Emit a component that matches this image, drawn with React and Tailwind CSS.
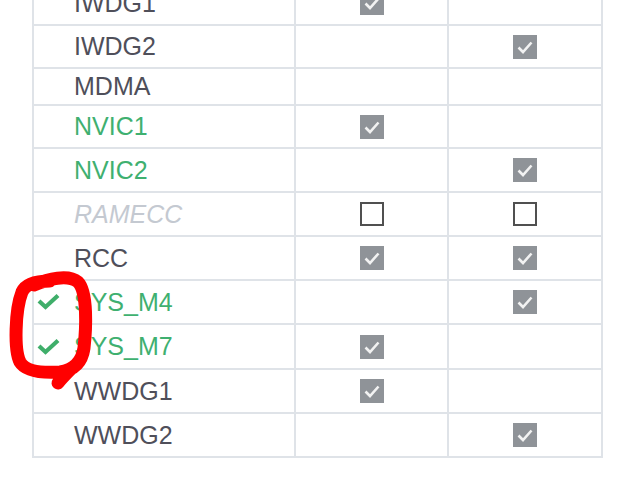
import React from "react";

const rows = [
  { name: "IWDG1", h: "h-[44px]", c1: "checked", c2: null, style: "normal" },
  { name: "IWDG2", h: "h-[43px]", c1: null, c2: "checked", style: "normal" },
  { name: "MDMA", h: "h-[37px]", c1: null, c2: null, style: "normal" },
  { name: "NVIC1", h: "h-[43px]", c1: "checked", c2: null, style: "green" },
  { name: "NVIC2", h: "h-[44px]", c1: null, c2: "checked", style: "green" },
  { name: "RAMECC", h: "h-[44px]", c1: "empty", c2: "empty", style: "disabled" },
  { name: "RCC", h: "h-[44px]", c1: "checked", c2: "checked", style: "normal" },
  { name: "SYS_M4", h: "h-[44px]", c1: null, c2: "checked", style: "green", ok: true },
  { name: "SYS_M7", h: "h-[45px]", c1: "checked", c2: null, style: "green", ok: true },
  { name: "WWDG1", h: "h-[44px]", c1: "checked", c2: null, style: "normal" },
  { name: "WWDG2", h: "h-[44px]", c1: null, c2: "checked", style: "normal" },
];

function Box({ state }) {
  if (state === "checked") {
    return (
      <div className="w-[24px] h-[24px] bg-[#8f9398] flex items-center justify-center">
        <svg width="24" height="24" viewBox="0 0 24 24">
          <path d="M5.5 12.5 L10 17 L18.5 7.5" fill="none" stroke="#f2f2f2" strokeWidth="2.6" />
        </svg>
      </div>
    );
  }
  if (state === "empty") {
    return <div className="w-[24px] h-[24px] border-2 border-[#505050] bg-white" />;
  }
  return null;
}

function GreenCheck() {
  return (
    <svg width="26" height="20" viewBox="0 0 26 20">
      <path d="M3 9 L9.5 15 L22 3.5" fill="none" stroke="#3fae6a" strokeWidth="4.2" />
    </svg>
  );
}

export default function App() {
  const textCls = {
    normal: "text-[#4f4f5a]",
    green: "text-[#3fb070]",
    disabled: "text-[#c4c9d1] italic",
  };
  return (
    <div className="relative w-[627px] h-[479px] overflow-hidden bg-white" style={{ fontFamily: '"Liberation Sans", Arial, sans-serif' }}>
      <div className="-mt-[18px] ml-[32px] w-[571px] border-l-2 border-r-2 border-[#dfe3e8]">
        {rows.map((r) => (
          <div key={r.name} className={`flex border-b-2 border-[#dfe3e8] ${r.h}`}>
            <div className="w-[262px] border-r-2 border-[#dfe3e8] flex items-center">
              <div className="w-[40px] flex items-center pl-[2px]">{r.ok ? <GreenCheck /> : null}</div>
              <span className={`text-[25px] leading-none ${textCls[r.style]}`}>{r.name}</span>
            </div>
            <div className="w-[153px] border-r-2 border-[#dfe3e8] flex items-center justify-center">
              <Box state={r.c1} />
            </div>
            <div className="flex-1 flex items-center justify-center">
              <Box state={r.c2} />
            </div>
          </div>
        ))}
      </div>
      <svg className="absolute left-0 top-0 pointer-events-none" width="627" height="479" viewBox="0 0 627 479">
        <path
          d="M34 285 C 48 279, 68 274, 78 282 C 88 292, 86 330, 84 348 C 82 362, 74 370, 60 372 C 45 373, 26 372, 20 362 C 14 350, 15 310, 22 292 C 26 283, 40 281, 50 281 M 72 368 C 66 374, 62 378, 58 383"
          fill="none"
          stroke="#ff0000"
          strokeWidth="13"
          strokeLinecap="round"
          strokeLinejoin="round"
        />
      </svg>
    </div>
  );
}
